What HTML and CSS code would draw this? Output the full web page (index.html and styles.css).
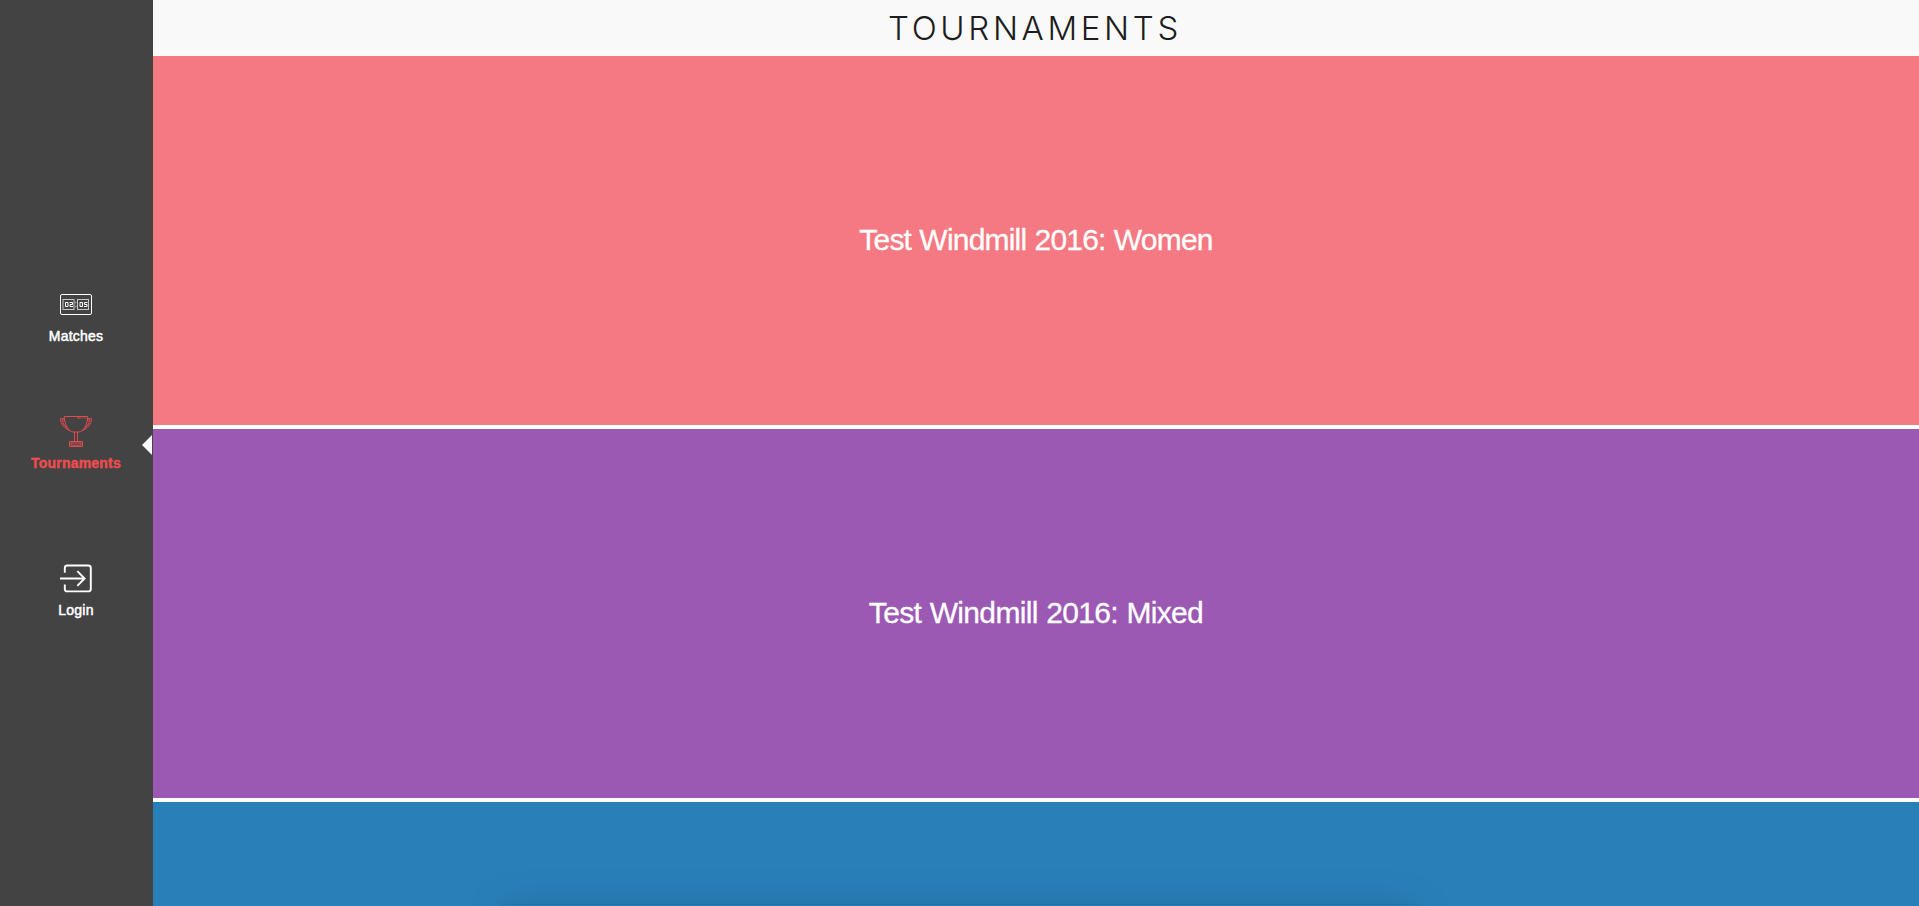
FILE: index.html
```html
<!DOCTYPE html>
<html lang="en">
<head>
<meta charset="utf-8">
<title>Tournaments</title>
<link rel="stylesheet" href="styles.css">
</head>
<body>
<div class="app">
  <nav class="sidebar">
    <a class="nav-item matches">
      <svg class="icon" width="34" height="34" viewBox="0 0 34 34" fill="none" stroke="currentColor">
        <rect x="1.500" y="7.500" width="31" height="20" rx="1.500"/>
        <g opacity=".7"><rect x="4" y="12.500" width="11" height="10"/><rect x="18.500" y="12.500" width="11" height="10"/></g>
        <path d="M6.500 15.500h2.500v4h-2.500zM10.500 15.500h3v2h-2.500v2h3M21 15.500h2.500v4h-2.500zM28.500 15.500h-3v2h2.500v2h-3"/>
        <path stroke-width="1.500" opacity=".5" d="M16 15.500h1.500M16 19.500h1.500"/>
      </svg>
      <span class="label">Matches</span>
    </a>
    <a class="nav-item tournaments active">
      <svg class="icon" width="34" height="34" viewBox="0 0 34 34" fill="none" stroke="currentColor" stroke-width=".9">
        <path d="M5.300 2.500h23.400c0 8-4.300 15.500-9.200 15.500h-5C9.600 18 5.300 10.500 5.300 2.500z"/>
        <path d="M5.600 4.700h-4.100c0 5.500 4.500 10.300 9.500 11.900M5.900 6.100h-2.700c.6 3.900 3 6.600 5.500 8M28.400 4.700h4.100c0 5.500-4.500 10.300-9.500 11.900M28.100 6.100h2.700c-.6 3.900-3 6.600-5.500 8"/>
        <path d="M15.500 18v9.500M18.500 18v9.500M10.500 27.500h13v5h-13zM12 29h10v2.200H12zM18 4h4M23.200 4h1.200M25.600 4h1.600"/>
      </svg>
      <span class="label">Tournaments</span>
    </a>
    <a class="nav-item login">
      <svg class="icon" width="34" height="34" viewBox="0 0 34 34" fill="none" stroke="currentColor" stroke-width="1.900">
        <path d="M5.800 11.800V7q0-2.500 2.500-2.500h21q2.500 0 2.500 2.500v20.900q0 2.500-2.500 2.500h-21q-2.500 0-2.500-2.500v-4.500M1 17.500h25M18.300 10.200l7.300 7.300-7.300 7.300"/>
      </svg>
      <span class="label">Login</span>
    </a>
  </nav>
  <main class="content">
    <header class="topbar"><h1>TOURNAMENTS</h1></header>
    <section class="card women"><span>Test Windmill 2016: Women</span></section>
    <section class="card mixed"><span>Test Windmill 2016: Mixed</span></section>
    <section class="card open"></section>
  </main>
  <div class="dock-shadow"></div>
</div>
</body>
</html>
```
FILE: styles.css
```css
* { box-sizing: border-box; }
body {
  margin: 0;
  height: 906px;
  overflow: hidden;
  background: #fff;
  font-family: "Liberation Sans", Arial, sans-serif;
}
.app {
  position: relative;
  display: flex;
  height: 906px;
  overflow: hidden;
}
.sidebar {
  flex: 0 0 153px;
  display: flex;
  flex-direction: column;
  padding-top: 287px;
  background: #434343;
  color: #fff;
}
.nav-item {
  position: relative;
  display: flex;
  flex-direction: column;
  align-items: center;
  width: 152px;
}
.matches { height: 127px; }
.tournaments { height: 147px; }
.icon { display: block; }
.label {
  margin-top: 7px;
  font-size: 14px;
  line-height: 16px;
  letter-spacing: 0.2px;
  -webkit-text-stroke: 0.5px currentColor;
}
.active { color: #f04c50; }
.active .label {
  font-weight: bold;
  letter-spacing: 0.2px;
  -webkit-text-stroke: 0.4px currentColor;
}
.active::after {
  content: "";
  position: absolute;
  right: 0;
  top: 21px;
  border: 10px solid transparent;
  border-left-width: 0;
  border-right-color: #f9f9f9;
}
.content { flex: 1; }
.topbar {
  display: flex;
  align-items: center;
  justify-content: center;
  height: 56px;
  background: #f9f9f9;
}
h1 {
  margin: 0 2px 0 0;
  font: 300 33px/40px Inter, "Liberation Sans", sans-serif;
  letter-spacing: 3.65px;
  color: #1d1d1d;
}
.card {
  display: flex;
  align-items: center;
  justify-content: center;
  height: 373px;
  padding-bottom: 2px;
  border-bottom: 4px solid #fff;
  color: #fff;
  font-size: 30px;
  letter-spacing: -0.8px;
  word-spacing: 0.7px;
}
.card span { -webkit-text-stroke: 0.3px currentColor; }
.women { background: #f57982; }
.mixed {
  background: #9b59b4;
  letter-spacing: -0.65px;
}
.open { background: #2980b9; }
.dock-shadow {
  position: absolute;
  left: 502px;
  top: 905px;
  width: 914px;
  height: 40px;
  box-shadow: 0 4px 42px rgba(0, 0, 0, .18), 0 0 1px rgba(0, 0, 0, .3);
}
```
